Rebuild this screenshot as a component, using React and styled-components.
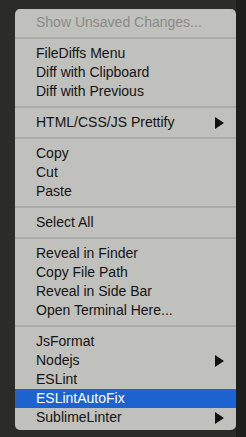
import React from 'react'
import styled, {createGlobalStyle} from 'styled-components'

const GlobalStyle = createGlobalStyle`
  html, body {
    margin: 0;
    padding: 0;
    background: #2a2a26;
  }
  body {
    font-family: 'Liberation Sans', Arial, sans-serif;
  }
`

const Screen = styled.div`
  width: 246px;
  height: 437px;
  padding: 9px 0 0 15px;
  box-sizing: border-box;
  background: linear-gradient(to right, #2b2b27 0, #2b2b27 236px, #1e1e1b 236px);
  overflow: hidden;
`

const Menu = styled.ul`
  list-style: none;
  margin: 0;
  padding: 4px 0 3px;
  width: 221px;
  box-sizing: border-box;
  background: #c0c0bc;
  border-radius: 5px;
`

const Item = styled.li`
  display: flex;
  align-items: center;
  justify-content: space-between;
  height: 19px;
  padding: 0 12px 0 21px;
  font-size: 14px;
  line-height: 19px;
  color: ${p => (p.$active ? '#fff' : p.$disabled ? '#8b8b87' : '#141414')};
  background: ${p => (p.$active ? '#1d63cf' : 'transparent')};
  white-space: nowrap;
`

const Separator = styled.li`
  height: 2px;
  margin: 5px 0;
  background: #abaaa6;
`

const Arrow = styled.span`
  width: 0;
  height: 0;
  border-top: 6px solid transparent;
  border-bottom: 6px solid transparent;
  border-left: 9px solid ${p => (p.$active ? '#fff' : '#111')};
`

const groups = [
  [{label: 'Show Unsaved Changes...', disabled: true}],
  [{label: 'FileDiffs Menu'}, {label: 'Diff with Clipboard'}, {label: 'Diff with Previous'}],
  [{label: 'HTML/CSS/JS Prettify', sub: true}],
  [{label: 'Copy'}, {label: 'Cut'}, {label: 'Paste'}],
  [{label: 'Select All'}],
  [
    {label: 'Reveal in Finder'},
    {label: 'Copy File Path'},
    {label: 'Reveal in Side Bar'},
    {label: 'Open Terminal Here...'}
  ],
  [
    {label: 'JsFormat'},
    {label: 'Nodejs', sub: true},
    {label: 'ESLint'},
    {label: 'ESLintAutoFix', active: true},
    {label: 'SublimeLinter', sub: true}
  ]
]

const App = () => (
  <Screen>
    <GlobalStyle />
    <Menu>
      {groups.map((group, gi) => (
        <React.Fragment key={gi}>
          {gi > 0 && <Separator />}
          {group.map(item => (
            <Item key={item.label} $active={item.active} $disabled={item.disabled}>
              <span>{item.label}</span>
              {item.sub && <Arrow $active={item.active} />}
            </Item>
          ))}
        </React.Fragment>
      ))}
    </Menu>
  </Screen>
)

export default App
